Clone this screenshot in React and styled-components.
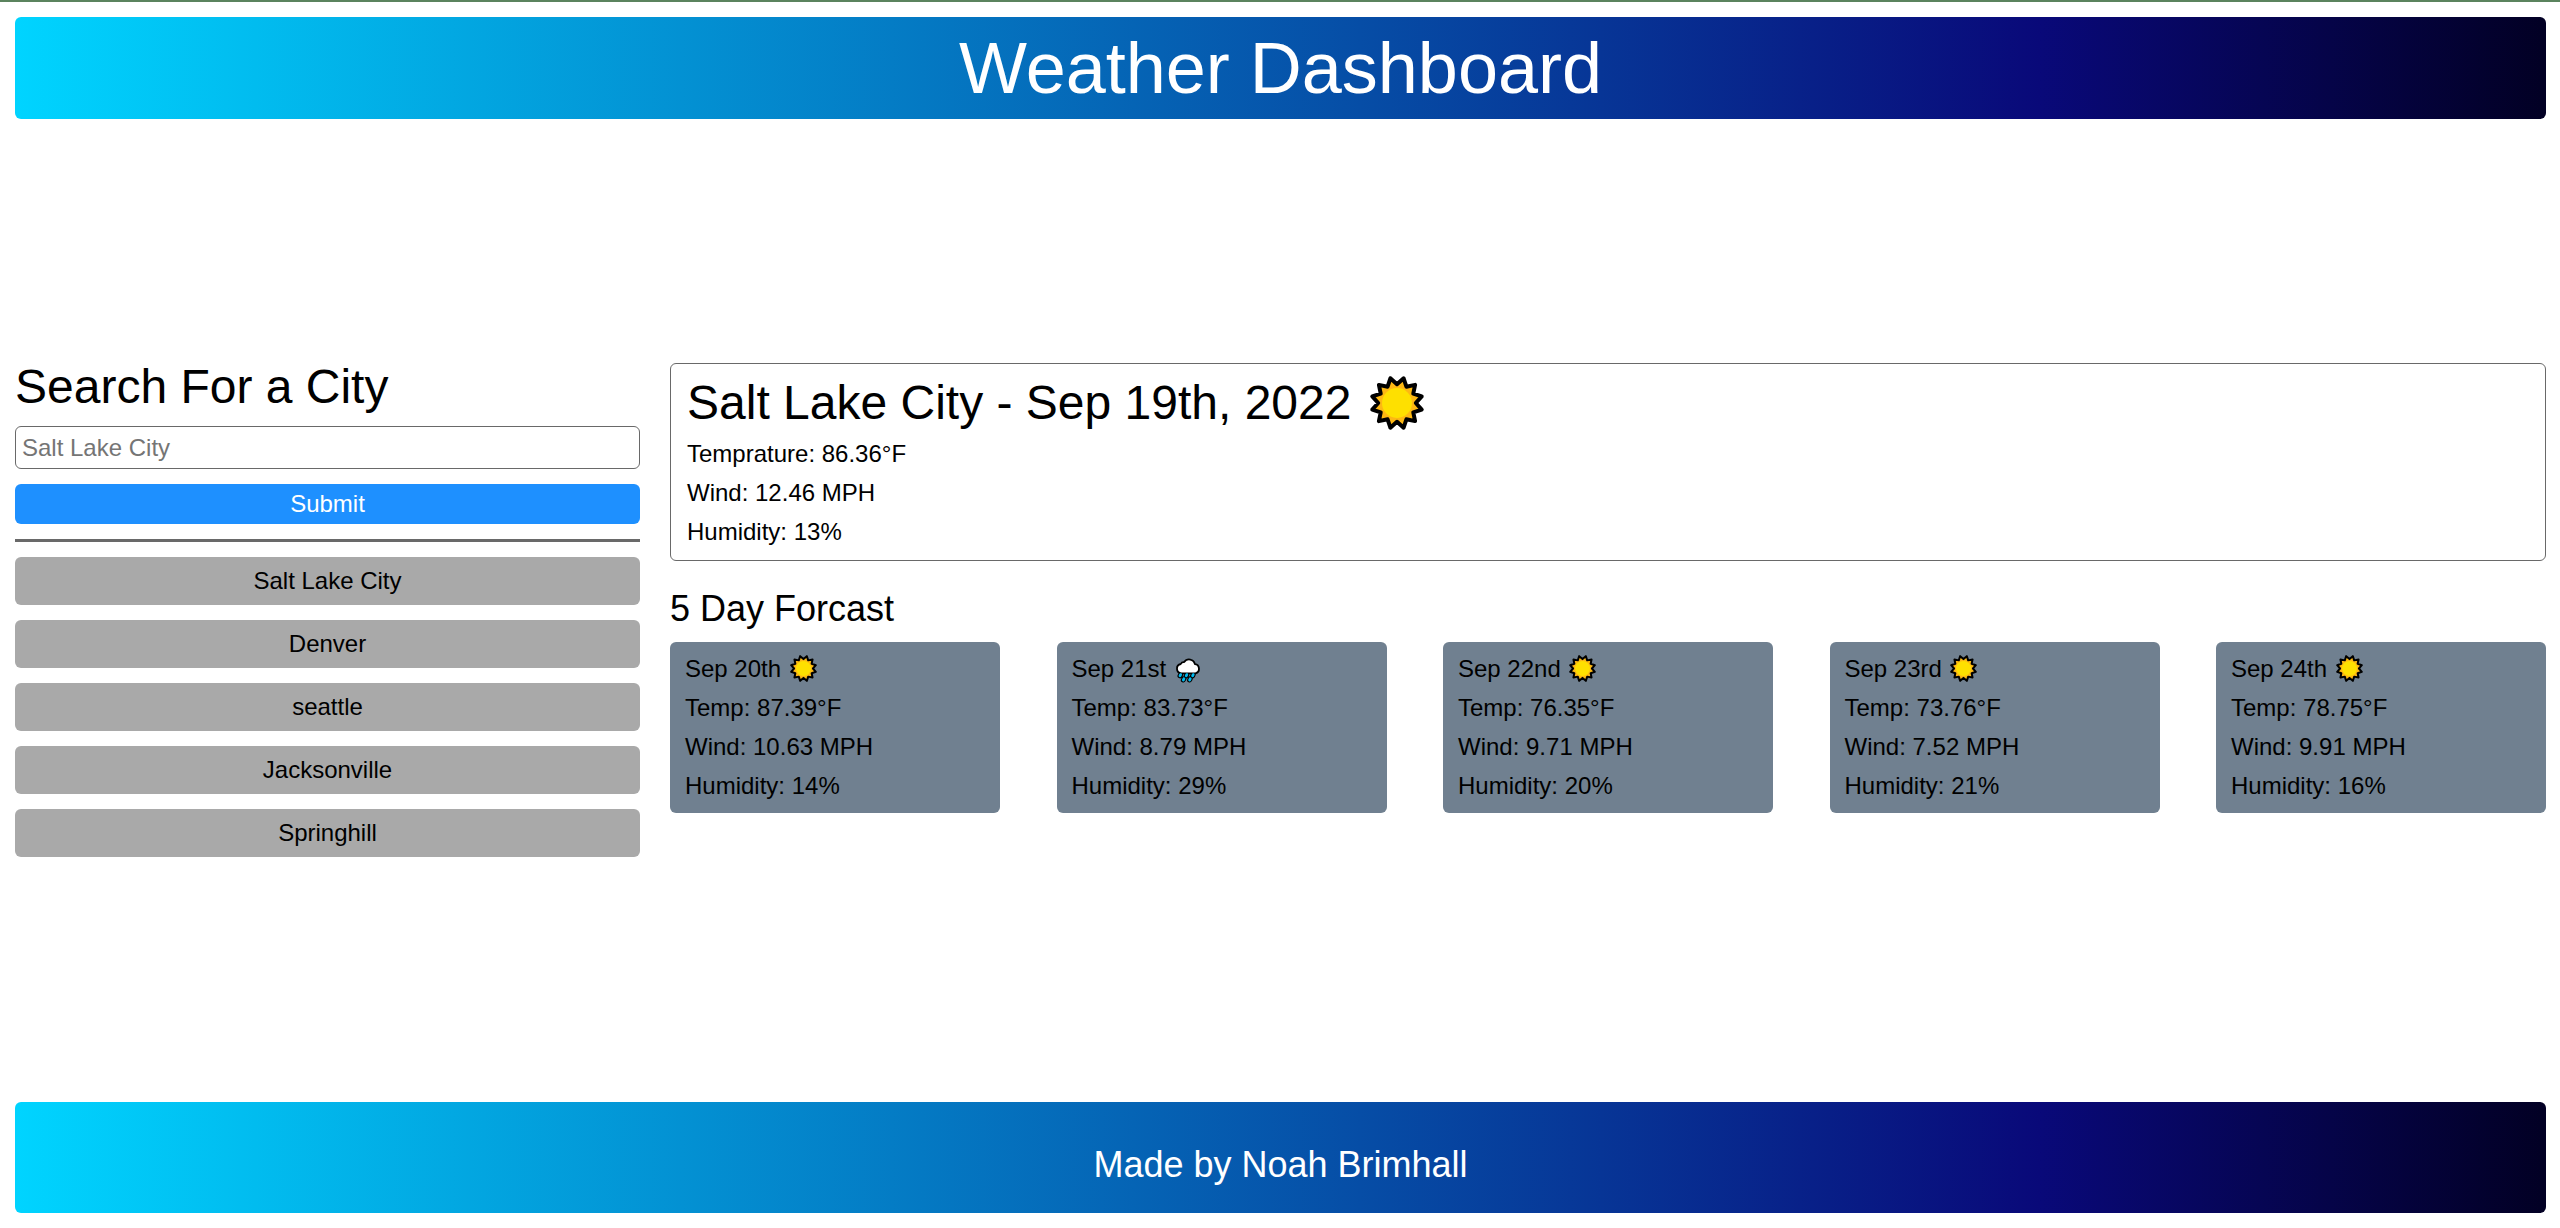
import React from "react";
import styled, { createGlobalStyle } from "styled-components";

const GlobalStyle = createGlobalStyle`
  * { box-sizing: border-box; margin: 0; padding: 0; }
  body {
    background: #fff;
    color: #000;
    font-family: Arial, "Liberation Sans", sans-serif;
    font-size: 24px;
  }
`;

const Page = styled.div`
  display: flex;
  flex-direction: column;
  height: 1228px;
  border-top: 2px solid #5b835e;
  padding: 15px 14px 15px 15px;
`;

const Banner = styled.header`
  display: flex;
  align-items: center;
  justify-content: center;
  height: ${(p) => p.$height}px;
  padding-top: ${(p) => p.$drop || 0}px;
  border-radius: 6px;
  color: #fff;
  font-size: ${(p) => p.$size}px;
  line-height: 1;
  background: linear-gradient(270deg, #020024 0%, #090979 20%, #00d4ff 100%);
`;

const BannerTitle = styled.h1`
  font-size: inherit;
  font-weight: 400;
`;

const Main = styled.main`
  flex: 1;
  display: flex;
  align-items: center;
  gap: 30px;
  padding-bottom: 1px;
`;

const Sidebar = styled.aside`
  display: flex;
  flex-direction: column;
  gap: 15px;
  width: 625px;
  height: 494px;
`;

const SearchTitle = styled.h2`
  font-size: 48px;
  font-weight: 400;
  line-height: 48px;
`;

const SearchInput = styled.input`
  height: 43px;
  border: 1px solid #696969;
  border-radius: 6px;
  padding: 0 6px;
  font: inherit;
  &::placeholder { color: #757575; }
`;

const Button = styled.button`
  flex: none;
  height: ${(p) => (p.$primary ? 40 : 48)}px;
  border: 0;
  border-radius: 6px;
  background: ${(p) => (p.$primary ? "#1e90ff" : "#a9a9a9")};
  color: ${(p) => (p.$primary ? "#fff" : "#000")};
  font: inherit;
`;

const Divider = styled.hr`
  border: 0;
  height: 3px;
  flex: none;
  background: #696969;
`;

const Content = styled.section`
  flex: 1;
  height: 494px;
`;

const Today = styled.article`
  height: 198px;
  border: 1px solid #696969;
  border-radius: 6px;
  padding: 14px 16px;
`;

const TodayTitle = styled.h2`
  display: flex;
  align-items: center;
  gap: 19px;
  height: 49px;
  margin-bottom: 13px;
  font-size: 48px;
  font-weight: 400;
  line-height: 49px;
`;

const Line = styled.p`
  display: flex;
  align-items: center;
  gap: 8.5px;
  height: 27px;
  line-height: 27px;
  & + & { margin-top: 12px; }
`;

const ForecastTitle = styled.h3`
  margin: 30px 0 15px;
  font-size: 36px;
  font-weight: 400;
  line-height: 36px;
`;

const Forecast = styled.div`
  display: flex;
  justify-content: space-between;
`;

const Day = styled.article`
  width: 330px;
  height: 171px;
  border-radius: 6px;
  padding: 13px 15px;
  background: #708090;
`;

const Icon = styled.svg`
  flex: none;
  width: ${(p) => p.$size}px;
  height: ${(p) => p.$size}px;
  overflow: visible;
`;

const sunPoints = Array.from({ length: 24 }, (_, i) => {
  const angle = (i * Math.PI) / 12;
  const r = i % 2 ? 25.6 : 18.8;
  return `${(27 + r * Math.sin(angle)).toFixed(2)},${(27 - r * Math.cos(angle)).toFixed(2)}`;
}).join(" ");

const Sun = ({ size }) => (
  <Icon $size={size} viewBox="0 0 54 54">
    <polygon points={sunPoints} fill="#fdb813" stroke="#000" strokeWidth="4" strokeLinejoin="round" />
    <circle cx="27" cy="27" r="15" fill="#fee000" />
  </Icon>
);

const drops = "M5.6 19.6l-.6 1.2M11.8 19.6l-.6 1.2M18.2 19.6l-.6 1.2M8.9 23.8l-.6 1.2M15.2 23.8l-.6 1.2";

const Rain = ({ size }) => (
  <Icon $size={size} viewBox="0 0 27 27">
    <path d={drops} stroke="#000" strokeWidth="5" strokeLinecap="round" />
    <path
      d="M6.3 18.3a4.7 4.7 0 0 1-.5-9.3 3.2 3.2 0 0 1 3.4-1.9 5.9 5.9 0 0 1 10.7 2 4.7 4.7 0 0 1 .6 9.2z"
      fill="#fff"
      stroke="#000"
      strokeWidth="1.8"
      strokeLinejoin="round"
    />
    <path d={drops} stroke="#00bcf2" strokeWidth="2.8" strokeLinecap="round" />
  </Icon>
);

const cities = ["Salt Lake City", "Denver", "seattle", "Jacksonville", "Springhill"];

const days = [
  { date: "Sep 20th", icon: Sun, temp: "87.39", wind: "10.63", humidity: 14 },
  { date: "Sep 21st", icon: Rain, temp: "83.73", wind: "8.79", humidity: 29 },
  { date: "Sep 22nd", icon: Sun, temp: "76.35", wind: "9.71", humidity: 20 },
  { date: "Sep 23rd", icon: Sun, temp: "73.76", wind: "7.52", humidity: 21 },
  { date: "Sep 24th", icon: Sun, temp: "78.75", wind: "9.91", humidity: 16 },
];

export default function App() {
  return (
    <Page>
      <GlobalStyle />
      <Banner $height={102} $size={72}>
        <BannerTitle>Weather Dashboard</BannerTitle>
      </Banner>
      <Main>
        <Sidebar>
          <SearchTitle>Search For a City</SearchTitle>
          <SearchInput placeholder="Salt Lake City" />
          <Button $primary>Submit</Button>
          <Divider />
          {cities.map((city) => (
            <Button key={city}>{city}</Button>
          ))}
        </Sidebar>
        <Content>
          <Today>
            <TodayTitle>
              Salt Lake City - Sep 19th, 2022
              <Sun size={54} />
            </TodayTitle>
            <Line>Temprature: 86.36°F</Line>
            <Line>Wind: 12.46 MPH</Line>
            <Line>Humidity: 13%</Line>
          </Today>
          <ForecastTitle>5 Day Forcast</ForecastTitle>
          <Forecast>
            {days.map(({ date, icon: Glyph, temp, wind, humidity }) => (
              <Day key={date}>
                <Line>
                  {date}
                  <Glyph size={27} />
                </Line>
                <Line>Temp: {temp}°F</Line>
                <Line>Wind: {wind} MPH</Line>
                <Line>Humidity: {humidity}%</Line>
              </Day>
            ))}
          </Forecast>
        </Content>
      </Main>
      <Banner as="footer" $height={111} $size={36} $drop={14}>
        <p>Made by Noah Brimhall</p>
      </Banner>
    </Page>
  );
}
